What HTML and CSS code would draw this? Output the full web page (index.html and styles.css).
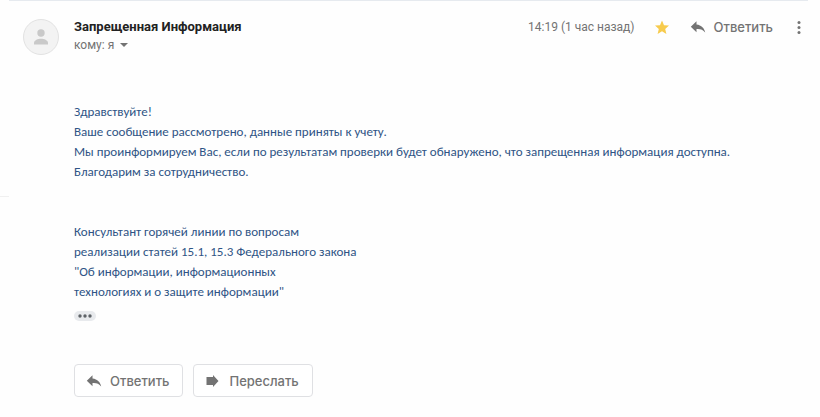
FILE: index.html
```
<!DOCTYPE html>
<html lang="ru">
<head>
<meta charset="UTF-8">
<meta name="viewport" content="width=device-width, initial-scale=1">
<title>Запрещенная Информация</title>
<link rel="stylesheet" href="styles.css">
</head>
<body>
<div class="page">
  <aside class="side"></aside>
  <main class="message">
    <header class="head">
      <svg class="avatar" viewBox="0 0 38 38">
        <circle cx="19" cy="19" r="17.5" fill="#f3f3f3" stroke="#e2e2e2"/>
        <circle cx="19" cy="15" r="3.7" fill="#c9c9c9"/>
        <path d="M12 26.500v-1.500c0-2.800 4-4.200 7-4.200s7 1.400 7 4.200v1.500z" fill="#c9c9c9"/>
      </svg>
      <div class="sender">
        <h1 class="name">Запрещенная Информация</h1>
        <button class="to">кому: я
          <svg class="caret" viewBox="0 0 8 4"><path d="M0 0h8L4 4z"/></svg>
        </button>
      </div>
      <div class="actions">
        <time class="time">14:19 (1 час назад)</time>
        <button class="icon-btn star" aria-label="Помечено">
          <svg viewBox="0 0 16 16"><path d="M8 1.500l2 4.700 5 .4-3.800 3.300 1.200 5L8 12.300l-4.400 2.600 1.200-5L1 6.600l5-.4z"/></svg>
        </button>
        <button class="reply">
          <svg class="icon" viewBox="0 0 16 14"><path d="M6.500 4.500V1.200L.8 6.700l5.700 5.500V9c3.800-.3 6.500.6 8.700 3.500C14.500 8.500 11.500 5 6.500 4.500z"/></svg>
          Ответить
        </button>
        <button class="icon-btn more" aria-label="Ещё">
          <svg viewBox="0 0 16 16"><circle cx="8" cy="3.500" r="1.500"/><circle cx="8" cy="8.500" r="1.500"/><circle cx="8" cy="13.500" r="1.500"/></svg>
        </button>
      </div>
    </header>

    <div class="content">
      <div class="text">
        <p>Здравствуйте!<br>
        Ваше сообщение рассмотрено, данные приняты к учету.<br>
        Мы проинформируем Вас, если по результатам проверки будет обнаружено, что запрещенная информация доступна.<br>
        Благодарим за сотрудничество.</p>
        <p>Консультант горячей линии по вопросам<br>
        реализации статей 15.1, 15.3 Федерального закона<br>
        "Об информации, информационных<br>
        технологиях и о защите информации"</p>
      </div>
      <button class="trimmed" aria-label="Показать сокращенный текст">
        <svg viewBox="0 0 14 4"><circle cx="2" cy="2" r="1.700"/><circle cx="7" cy="2" r="1.700"/><circle cx="12" cy="2" r="1.700"/></svg>
      </button>
      <div class="buttons">
        <button class="btn">
          <svg class="icon" viewBox="0 0 16 14"><path d="M6.500 4.500V1.200L.8 6.700l5.700 5.500V9c3.800-.3 6.500.6 8.700 3.500C14.500 8.500 11.500 5 6.500 4.500z"/></svg>
          Ответить
        </button>
        <button class="btn">
          <svg class="icon" viewBox="0 0 16 14"><path d="M1.500 3H8V1l5.500 6L8 13v-2H1.500z"/></svg>
          Переслать
        </button>
      </div>
    </div>
  </main>
</div>
</body>
</html>
```
FILE: styles.css
```
body {
  margin: 0;
  background: #fefefe;
  color: #222;
  font-family: Roboto, "Liberation Sans", sans-serif;
}
button {
  padding: 0;
  border: none;
  background: none;
  color: #737373;
  font-family: inherit;
  cursor: pointer;
}
svg {
  display: block;
  fill: currentColor;
}
.page {
  display: grid;
  grid-template-columns: 9px 1fr;
  padding-right: 12px;
}
.side {
  height: 196px;
  border-bottom: 1px solid #f0f0f0;
}
.message {
  border-top: 1px solid #e6eaef;
}

/* шапка письма */
.head {
  display: flex;
  align-items: flex-start;
  padding: 17px 1px 0 13px;
}
.avatar {
  width: 38px;
  height: 38px;
  margin-right: 14px;
}
.name {
  margin: 0;
  font-size: 13px;
  line-height: 18px;
  font-weight: bold;
}
.to {
  display: flex;
  align-items: center;
  gap: 6px;
  font-size: 12px;
  line-height: 18px;
}
.caret {
  width: 8px;
  height: 4px;
}
.actions {
  display: flex;
  align-items: center;
  height: 18px;
  margin-left: auto;
}
.time {
  color: #737373;
  font-size: 12px;
}
.icon-btn svg {
  width: 16px;
  height: 16px;
}
.star {
  margin: 0 20px 0 19px;
  color: #f7cb4d;
}
.more {
  margin-left: 18px;
}
.icon {
  width: 16px;
  height: 14px;
}
.reply, .btn {
  display: flex;
  align-items: center;
  gap: 8px;
  font-family: Inter, Roboto, sans-serif;
  font-size: 13px;
  font-weight: 500;
}

/* текст письма */
.content {
  padding: 46px 0 20px 65px;
}
.text {
  color: #2f5485;
  font-family: Calibri, Carlito, Lato, sans-serif;
  font-size: 13px;
  line-height: 20px;
}
.text p {
  margin: 0 0 40px;
}
.text p:last-child {
  margin-bottom: 9px;
}
.trimmed {
  display: flex;
  align-items: center;
  justify-content: center;
  width: 22px;
  height: 10px;
  border-radius: 5px;
  background: #e8eaed;
  color: #5f6368;
}
.trimmed svg {
  width: 14px;
  height: 4px;
}

/* кнопки под письмом */
.buttons {
  display: flex;
  gap: 10px;
  margin-top: 43px;
}
.btn {
  height: 33px;
  padding: 0 13px 0 11px;
  border: 1px solid #dfe0e3;
  border-radius: 4px;
  background: #fff;
}
```
